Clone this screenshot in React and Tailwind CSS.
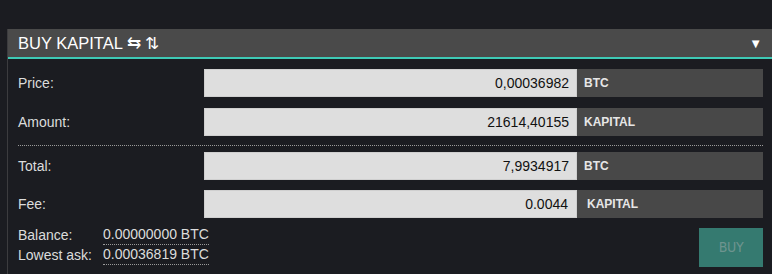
import React from "react";

const rows = [
  { label: "Price:", value: "0,00036982", unit: "BTC" },
  { label: "Amount:", value: "21614,40155", unit: "KAPITAL" },
];
const rows2 = [
  { label: "Total:", value: "7,9934917", unit: "BTC" },
  { label: "Fee:", value: "0.0044", unit: "KAPITAL", fee: true },
];

const Row = ({ row }) => (
  <div className="flex items-center h-[28px]">
    <div className="w-[186px] text-[14px] text-[#dcdcdc]">{row.label}</div>
    <div className={`w-[373px] h-full bg-[#dedede] border border-[#cfcfcf] flex items-center justify-end text-[14px] text-[#111] ${row.fee ? "pr-[8px]" : "pr-[7px]"}`}>
      {row.value}
    </div>
    <div className={`flex-1 h-full bg-[#484848] flex items-center text-[12px] font-bold text-[#e6e6e6] ${row.fee ? "pl-[10px]" : "pl-[7px]"}`}>
      {row.unit}
    </div>
  </div>
);

const App = () => {
  return (
    <div className="w-[772px] h-[274px] bg-[#1b1c21] pt-[29px] pl-[7px] overflow-hidden font-['Liberation_Sans',Arial,sans-serif]">
      <div className="border-l border-[#3c3c3f] h-full">
        <div className="h-[30px] bg-[#4a4a4a] border-b-2 border-[#3ec9b5] flex items-center justify-between pl-[10px] pr-[10px]">
          <span className="text-[16.5px] text-white leading-none">BUY KAPITAL ⇆ ⇅</span>
          <span className="text-[13px] text-white leading-none">▼</span>
        </div>
        <div className="pl-[10px] pr-[9px] pt-[10px]">
          <div className="flex flex-col gap-[11px]">
            {rows.map((r) => (
              <Row key={r.label} row={r} />
            ))}
          </div>
          <div className="border-b border-dotted border-[#9a9a9a] mt-[9px] mb-[6px]" />
          <div className="flex flex-col gap-[10px]">
            {rows2.map((r) => (
              <Row key={r.label} row={r} />
            ))}
          </div>
          <div className="flex justify-between mt-[7px]">
            <div className="text-[14px] text-[#dcdcdc] leading-[20px]">
              <div className="flex">
                <span className="w-[85px]">Balance:</span>
                <span className="border-b border-dotted border-[#9a9a9a] leading-[18px]">0.00000000 BTC</span>
              </div>
              <div className="flex">
                <span className="w-[85px]">Lowest ask:</span>
                <span className="border-b border-dotted border-[#9a9a9a] leading-[18px]">0.00036819 BTC</span>
              </div>
            </div>
            <button className="w-[64px] h-[39px] mt-[3px] bg-[#357a70] text-[#6e948f] text-[14px] tracking-tight font-['DejaVu_Sans_Condensed',sans-serif]">
              BUY
            </button>
          </div>
        </div>
      </div>
    </div>
  );
};

export default App;
